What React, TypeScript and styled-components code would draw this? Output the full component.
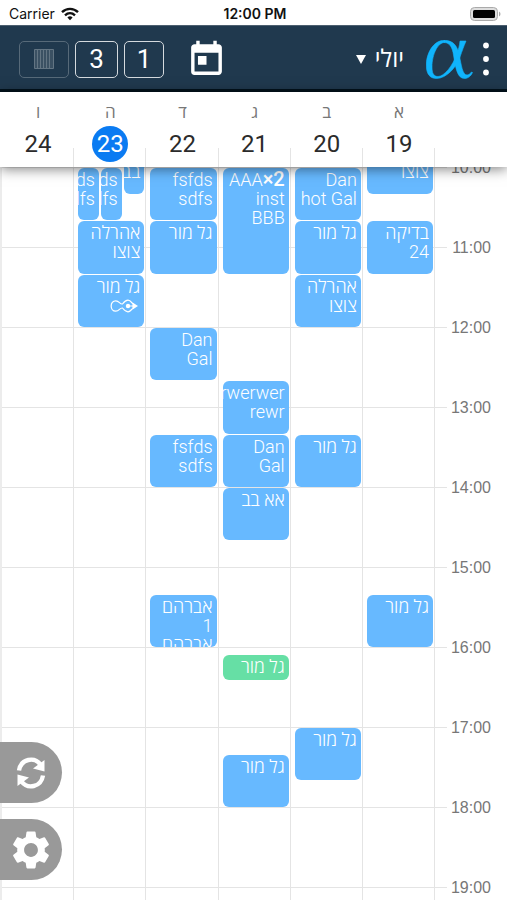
import React from "react";
import styled, { createGlobalStyle } from "styled-components";
import { MdToday, MdSettings } from "react-icons/md";

const uiFont = `Roboto, "Open Sans", "Liberation Sans", sans-serif`;

const GlobalStyle = createGlobalStyle`
  *, *::before, *::after { box-sizing: border-box; }
  body { margin: 0; background: #fff; font-family: ${uiFont}; }
  button, select { font-family: inherit; margin: 0; padding: 0; border: 0; background: none; color: inherit; cursor: pointer; }
`;

const Screen = styled.div`
  position: relative;
  display: flex;
  flex-direction: column;
  height: 100vh;
  overflow: hidden;
  background: #fff;
`;

const StatusBar = styled.div`
  flex: none;
  display: grid;
  grid-template-columns: 1fr auto 1fr;
  align-items: center;
  height: 25px;
  padding: 2px 6px 0 9px;
  background: #fff;
  color: #111;
  font-family: Inter, sans-serif;
  font-size: 14px;
  line-height: 20px;
`;

const Carrier = styled.div`
  display: flex;
  align-items: center;
  gap: 6px;
`;

const Clock = styled.time`
  font-weight: 600;
`;

const Battery = styled.svg`
  justify-self: end;
`;

const Toolbar = styled.header`
  flex: none;
  display: flex;
  align-items: center;
  height: 67px;
  padding: 3px 16px 0 19px;
  border-top: 1px solid #4c5f6f;
  border-bottom: 3px solid #02121c;
  background: #20394e;
  color: #fff;
`;

const MenuButton = styled.button`
  display: grid;
  width: 10px;
  height: 40px;
  place-items: center;
`;

const Logo = styled.svg`
  margin: 0 8px 0 22px;
`;

const MonthField = styled.label`
  display: flex;
  align-items: center;
  gap: 6px;
`;

const MonthSelect = styled.select`
  appearance: none;
  width: 32px;
  height: 36px;
  outline: 0;
  font-size: 24px;
`;

const Spacer = styled.div`
  flex: 1;
`;

const TodayButton = styled.button`
  display: grid;
  margin-left: 22px;
`;

const ViewButtons = styled.div`
  display: flex;
  gap: 6px;
`;

const ViewButton = styled.button<{ $width: number; $faded?: boolean }>`
  display: grid;
  place-items: center;
  width: ${(p) => p.$width}px;
  height: 37px;
  border: 1px solid #d5dade;
  border-radius: 5px;
  font-size: 26px;
  line-height: 32px;
  opacity: ${(p) => (p.$faded ? 0.3 : 1)};
`;

const columns = `72px repeat(6, 1fr)`;

const DaysHeader = styled.div`
  position: relative;
  z-index: 2;
  flex: none;
  display: grid;
  grid-template-columns: ${columns};
  height: 75px;
  padding-left: 2px;
  background: #fff;
  box-shadow: 0 2px 12px rgba(0, 0, 0, 0.5);
`;

const DayHead = styled.div`
  display: flex;
  flex-direction: column;
  align-items: center;
  padding-top: 8px;
  background: linear-gradient(#e4e4e4, #e4e4e4) right bottom / 1px 19px no-repeat;
`;

const DayName = styled.span`
  color: #777;
  font-size: 17px;
  line-height: 24px;
`;

const DayNumber = styled.span<{ $today?: boolean }>`
  width: 36px;
  height: 36px;
  margin-top: 2px;
  border-radius: 50%;
  background: ${(p) => (p.$today ? "#0a7bf2" : "transparent")};
  color: ${(p) => (p.$today ? "#fff" : "#2b2b2b")};
  font-size: 24px;
  line-height: 36px;
  text-align: center;
`;

const Calendar = styled.main`
  flex: 1;
  min-height: 0;
  overflow: hidden;
  border-left: 2px solid #ececec;
`;

/* Scrolled so that the 10:00 line meets the bottom of the day header. */
const Week = styled.div<{ $hours: number }>`
  display: grid;
  grid-template-columns: ${columns};
  grid-template-rows: ${(p) => p.$hours * 80}px;
  margin-top: -80px;
`;

const Hours = styled.div`
  display: flex;
  flex-direction: column;
`;

const Hour = styled.time`
  height: 80px;
  padding-right: 16px;
  background: linear-gradient(#e4e4e4, #e4e4e4) left top / 12px 1px no-repeat;
  color: #777;
  font-family: "Liberation Sans", sans-serif;
  font-size: 16px;
  line-height: 20px;

  span {
    display: block;
    margin-top: -9px;
  }
`;

const Day = styled.section<{ $rows: number; $lanes: number }>`
  display: grid;
  grid-template-rows: repeat(${(p) => p.$rows}, minmax(0, 1fr));
  grid-template-columns: repeat(${(p) => p.$lanes}, minmax(0, 1fr));
  column-gap: 2px;
  padding: 0 1px 0 4px;
  border-right: 1px solid #e4e4e4;
  background: repeating-linear-gradient(#e4e4e4 0 1px, transparent 1px 80px);
`;

const EventCard = styled.article<{ $start: number; $end: number; $lane: string; $color: string }>`
  grid-row: ${(p) => p.$start} / ${(p) => p.$end};
  grid-column: ${(p) => p.$lane};
  min-height: 0;
  margin-top: 1px;
  padding: 2px 4px 0 2px;
  overflow: hidden;
  border-radius: 6px;
  background: ${(p) => p.$color};
  color: #fff;
  font-size: 18px;
  font-weight: 300;
  line-height: 19px;
`;

const Count = styled.b`
  font-size: 20px;
  font-weight: 500;
`;

const Signature = styled.svg`
  display: block;
  margin: 3px 2px 0 0;
`;

const SideActions = styled.nav`
  position: absolute;
  left: 0;
  bottom: 20px;
  z-index: 3;
  display: flex;
  flex-direction: column;
  gap: 16px;
`;

const SideButton = styled.button`
  display: grid;
  place-items: center;
  width: 62px;
  height: 61px;
  border-radius: 0 31px 31px 0;
  background: #999;
  color: #fff;
`;

const BLUE = "#67b9ff";
const GREEN = "#66dfa5";
const FIRST_HOUR = 9;
const LAST_HOUR = 19;
const HOUR_COUNT = LAST_HOUR - FIRST_HOUR + 1;
const MINUTES_PER_ROW = 5;
const ROWS = (HOUR_COUNT * 60) / MINUTES_PER_ROW;

type Appointment = {
  from: string;
  to: string;
  title: string;
  lane?: number;
  count?: number;
  rest?: string;
  color?: string;
  signed?: boolean;
};

type DayData = { name: string; number: number; today?: boolean; lanes?: number; items: Appointment[] };

const days: DayData[] = [
  {
    name: "א",
    number: 19,
    items: [
      { from: "9:40", to: "10:20", title: "אהרלה צוצו" },
      { from: "10:40", to: "11:20", title: "בדיקה 24" },
      { from: "15:20", to: "16:00", title: "גל מור" },
    ],
  },
  {
    name: "ב",
    number: 20,
    items: [
      { from: "10:00", to: "10:40", title: "Dan hot Gal" },
      { from: "10:40", to: "11:20", title: "גל מור" },
      { from: "11:20", to: "12:00", title: "אהרלה צוצו" },
      { from: "13:20", to: "14:00", title: "גל מור" },
      { from: "17:00", to: "17:40", title: "גל מור" },
    ],
  },
  {
    name: "ג",
    number: 21,
    items: [
      { from: "10:00", to: "11:20", title: "AAA", count: 2, rest: "inst BBB" },
      { from: "12:40", to: "13:20", title: "erwerwer rewr" },
      { from: "13:20", to: "14:00", title: "Dan Gal" },
      { from: "14:00", to: "14:40", title: "אא בב" },
      { from: "16:05", to: "16:25", title: "גל מור", color: GREEN },
      { from: "17:20", to: "18:00", title: "גל מור" },
    ],
  },
  {
    name: "ד",
    number: 22,
    items: [
      { from: "10:00", to: "10:40", title: "fsfds sdfs" },
      { from: "10:40", to: "11:20", title: "גל מור" },
      { from: "12:00", to: "12:40", title: "Dan Gal" },
      { from: "13:20", to: "14:00", title: "fsfds sdfs" },
      { from: "15:20", to: "16:00", title: "אברהם 1 אברהם" },
    ],
  },
  {
    name: "ה",
    number: 23,
    today: true,
    lanes: 3,
    items: [
      { from: "9:40", to: "10:20", title: "אא בב", lane: 1 },
      { from: "10:00", to: "10:40", title: "fsfds sdfs", lane: 2 },
      { from: "10:00", to: "10:40", title: "fsfds sdfs", lane: 3 },
      { from: "10:40", to: "11:20", title: "אהרלה צוצו" },
      { from: "11:20", to: "12:00", title: "גל מור", signed: true },
    ],
  },
  { name: "ו", number: 24, items: [] },
];

const months = ["ינואר", "פברואר", "מרץ", "אפריל", "מאי", "יוני", "יולי", "אוגוסט", "ספטמבר", "אוקטובר", "נובמבר", "דצמבר"];

const rowOf = (time: string) => {
  const [h, m] = time.split(":").map(Number);
  return ((h - FIRST_HOUR) * 60 + m) / MINUTES_PER_ROW + 1;
};

const WifiIcon = () => (
  <svg width="18" height="14" viewBox="0 0 18 14" fill="none" stroke="#111" strokeWidth="2.4" aria-hidden="true">
    <path d="M1 5.2C5.6 0.8 12.4 0.8 17 5.2" />
    <path d="M4 8.3C7 5.6 11 5.6 14 8.3" />
    <path d="M6.4 10.4C8 9 10 9 11.6 10.4L9 13.2Z" fill="#111" stroke="none" />
  </svg>
);

const AlphaLogo = () => (
  <Logo width="47" height="39" viewBox="0 0 47 39" fill="#10b4fc" stroke="#10b4fc" strokeWidth=".6" role="img" aria-label="α">
    <path d="M18.5.3C7 .3 0 14 .3 26C.5 34 4 38.5 10.5 38.5C20.5 38.5 30.5 27 34 17C36.3 10.5 37.5 7 40 1H34C33.5 6 32.5 9 31 13C27 26 18 36.5 12 36.5C7.5 36.5 6 33 6 27C6 14 12 2.5 18.5 2.5Z" />
    <path d="M18 .3C27.5 .3 31.5 6 33.5 16C35.3 25 36.5 35 41 35C42.5 35 44 34 45.5 32L46.5 32.5C45 36 42 38.5 38.5 38.5C31 38.5 29.5 27 27.5 15C26.5 8 24 2.5 18 2.5Z" />
  </Logo>
);

const StripesIcon = () => (
  <svg width="20" height="20" viewBox="0 0 20 20" fill="#ffffff66" stroke="#fff" aria-hidden="true">
    <path d="M.5 .5H19.5V19.5H.5ZM3.5 0V20M6.5 0V20M9.5 0V20M12.5 0V20M15.5 0V20" />
  </svg>
);

const SyncIcon = () => (
  <svg width="30" height="32" viewBox="0 0 30 32" aria-hidden="true">
    <g fill="none" stroke="#fff" strokeWidth="4.4">
      <path d="M3 13.5C5 1.5 18.5-.5 24.5 7.5" />
      <path d="M27 18.5C25 30.5 11.5 32.5 5.5 24.5" />
    </g>
    <path fill="#fff" d="M28.5 3V14.5L17 11.5ZM1.5 29V17.5L13 20.5Z" />
  </svg>
);

const SignIcon = () => (
  <Signature width="28" height="14" viewBox="0 0 28 14" fill="none" stroke="#fff" strokeWidth="1.2" role="img" aria-label="חתום">
    <path d="M12.5 5C9.5 5.4 9.5 1.8 5.8 1.8C-.4 1.8-.4 12.2 5.8 12.2C9.5 12.2 9.5 8.6 12.5 9C14 11 15.5 12.8 18 12.8C20.5 12.8 22 9.8 23 9.2V4.8C22 4.2 20.5 1.2 18 1.2C15.5 1.2 14 3 12.5 5Z" />
    <path d="M23 3.8L28 7L23 10.2Z" fill="#fff" stroke="none" />
    <circle cx="18" cy="7" r="2.2" fill="#fff" stroke="none" />
    <path d="M18 7H24" />
  </Signature>
);

export default function App() {
  return (
    <Screen dir="rtl">
      <GlobalStyle />
      <StatusBar dir="ltr">
        <Carrier>
          Carrier <WifiIcon />
        </Carrier>
        <Clock>12:00 PM</Clock>
        <Battery width="31" height="14" viewBox="0 0 31 14" aria-label="סוללה">
          <rect x=".5" y=".5" width="27" height="13" rx="4" fill="#ddd" stroke="#aaa" />
          <rect x="3" y="3" width="22" height="8" rx="1.5" fill="#000" />
          <path d="M29 4.5C31 5.5 31 8.5 29 9.5Z" fill="#aaa" />
        </Battery>
      </StatusBar>

      <Toolbar>
        <MenuButton aria-label="תפריט">
          <svg width="6" height="34" viewBox="0 0 6 34" fill="#fff" aria-hidden="true">
            <circle cx="3" cy="3.5" r="2.9" />
            <circle cx="3" cy="17" r="2.9" />
            <circle cx="3" cy="30.5" r="2.9" />
          </svg>
        </MenuButton>
        <AlphaLogo />
        <MonthField>
          <MonthSelect aria-label="חודש" defaultValue="יולי">
            {months.map((m) => (
              <option key={m}>{m}</option>
            ))}
          </MonthSelect>
          <svg width="10" height="9" viewBox="0 0 10 9" fill="#fff" aria-hidden="true">
            <path d="M0 0H10L5 9Z" />
          </svg>
        </MonthField>
        <Spacer />
        <TodayButton aria-label="היום">
          <MdToday size={41} />
        </TodayButton>
        <ViewButtons>
          <ViewButton $width={40}>1</ViewButton>
          <ViewButton $width={43}>3</ViewButton>
          <ViewButton $width={50} $faded aria-label="שבוע">
            <StripesIcon />
          </ViewButton>
        </ViewButtons>
      </Toolbar>

      <DaysHeader>
        <span />
        {days.map((d) => (
          <DayHead key={d.number}>
            <DayName>{d.name}</DayName>
            <DayNumber $today={d.today}>{d.number}</DayNumber>
          </DayHead>
        ))}
      </DaysHeader>

      <Calendar>
        <Week $hours={HOUR_COUNT}>
          <Hours>
            {Array.from({ length: HOUR_COUNT }, (_, i) => (
              <Hour key={i}>
                <span>{`${FIRST_HOUR + i}:00`}</span>
              </Hour>
            ))}
          </Hours>
          {days.map((d) => (
            <Day key={d.number} $rows={ROWS} $lanes={d.lanes ?? 1}>
              {d.items.map((e, i) => (
                <EventCard
                  key={i}
                  $start={rowOf(e.from)}
                  $end={rowOf(e.to)}
                  $lane={e.lane ? String(e.lane) : "1 / -1"}
                  $color={e.color ?? BLUE}
                >
                  {e.count ? (
                    <bdi>
                      {e.title}
                      <Count>×{e.count}</Count> {e.rest}
                    </bdi>
                  ) : (
                    e.title
                  )}
                  {e.signed && <SignIcon />}
                </EventCard>
              ))}
            </Day>
          ))}
        </Week>
      </Calendar>

      <SideActions>
        <SideButton aria-label="רענון">
          <SyncIcon />
        </SideButton>
        <SideButton aria-label="הגדרות">
          <MdSettings size={46} />
        </SideButton>
      </SideActions>
    </Screen>
  );
}
